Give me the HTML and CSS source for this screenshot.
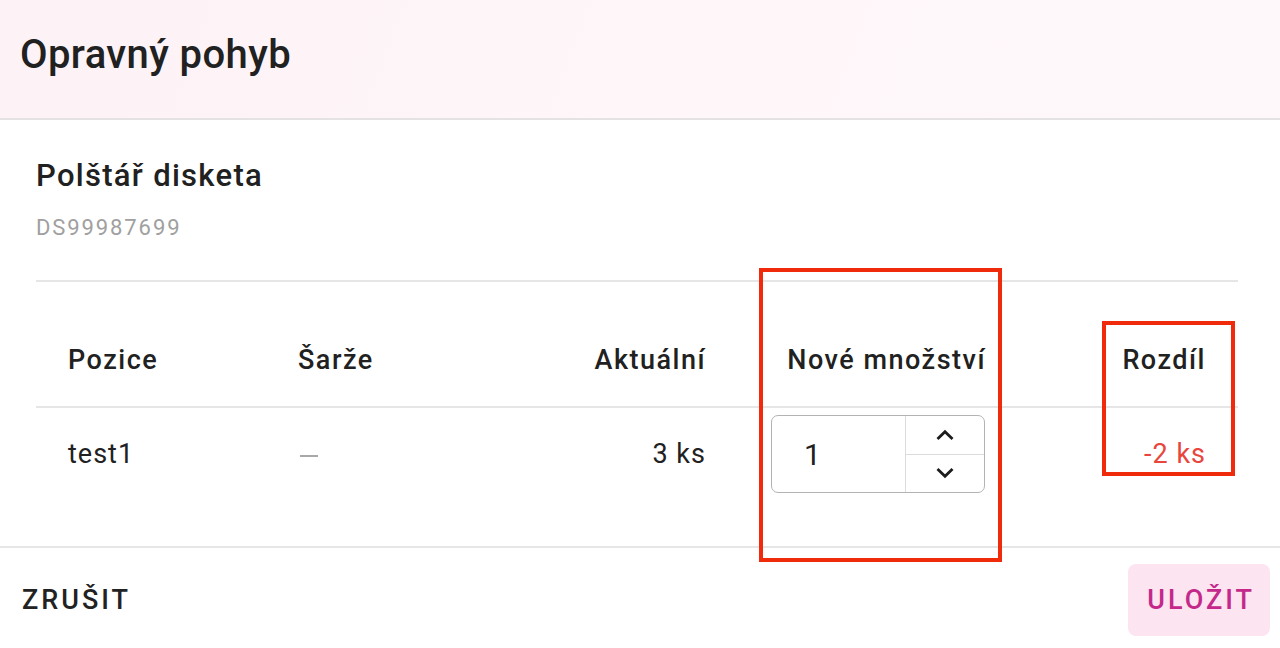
FILE: index.html
```html
<!DOCTYPE html>
<html lang="cs">
  <head>
    <meta charset="UTF-8" />
    <meta name="viewport" content="width=device-width, initial-scale=1.0" />
    <title>Opravný pohyb</title>
    <link rel="stylesheet" href="styles.css">
  </head>

  <body>
    <div class="dialog">
      <div class="dialog-header">
        <h1>Opravný pohyb</h1>
      </div>

      <div class="dialog-body">
        <div class="product">
          <h2>Polštář disketa</h2>
          <div class="sku">DS99987699</div>
        </div>

        <div class="table">
          <div class="row head">
            <div class="cell">Pozice</div>
            <div class="cell">Šarže</div>
            <div class="cell right">Aktuální</div>
            <div class="cell right">Nové množství</div>
            <div class="cell right">Rozdíl</div>
          </div>
          <div class="row">
            <div class="cell">test1</div>
            <div class="cell"><span class="dash"></span></div>
            <div class="cell right">3 ks</div>
            <div class="cell">
              <div class="qty">
                <input type="text" value="1" />
                <div class="spin">
                  <button type="button">
                    <svg width="20" height="12" viewBox="0 0 20 12"><path d="M2.5 10 L10 2.8 L17.5 10" fill="none" stroke="#1c1c1c" stroke-width="2.8"/></svg>
                  </button>
                  <button type="button">
                    <svg width="20" height="12" viewBox="0 0 20 12"><path d="M2.5 2 L10 9.2 L17.5 2" fill="none" stroke="#1c1c1c" stroke-width="2.8"/></svg>
                  </button>
                </div>
              </div>
            </div>
            <div class="cell right diff">-2 ks</div>
          </div>
        </div>
      </div>

      <div class="dialog-footer">
        <button type="button" class="btn">Zrušit</button>
        <button type="button" class="btn primary">Uložit</button>
      </div>
    </div>

    <!-- annotation marks -->
    <div class="mark mark-qty"></div>
    <div class="mark mark-diff"></div>
  </body>
</html>
```

FILE: styles.css
```css
* {
  box-sizing: border-box;
}

body {
  margin: 0;
  padding: 0;
  background-color: #fff;
  font-family: Roboto, "Noto Sans", sans-serif;
  color: #212121;
  width: 1280px;
  height: 648px;
  overflow: hidden;
  position: relative;
}

.dialog-header {
  height: 120px;
  padding-left: 20px;
  display: flex;
  align-items: center;
  padding-bottom: 10px;
  background: linear-gradient(110deg, #fdf2f6 0%, #fef6f9 50%, #fff8fa 100%);
  border-bottom: 2px solid #e4e2e3;
}

.dialog-header h1 {
  margin: 0;
  font-size: 40px;
  font-weight: 500;
  letter-spacing: 0.4px;
}

.dialog-body {
  padding: 0 42px 0 36px;
  height: 426px;
}

.product {
  padding-top: 37px;
  height: 162px;
  border-bottom: 2px solid #e6e6e6;
}

.product h2 {
  margin: 0;
  font-size: 31px;
  line-height: 38px;
  font-weight: 500;
  letter-spacing: 1.3px;
}

.sku {
  margin-top: 19px;
  font-size: 22px;
  line-height: 28px;
  color: #a0a0a0;
  letter-spacing: 1.9px;
}

.row {
  display: grid;
  grid-template-columns: 230px 230px 241px 280px 1fr;
}

.row.head {
  height: 126px;
  align-items: end;
  padding-bottom: 30px;
  border-bottom: 2px solid #e6e6e6;
  font-size: 27px;
  line-height: 32px;
  font-weight: 500;
  letter-spacing: 1.5px;
}

.row:not(.head) {
  height: 92px;
  align-items: center;
  font-size: 27px;
  letter-spacing: 1px;
}

.cell {
  padding: 0 32px;
}

.cell.right {
  text-align: right;
}

.row .cell:nth-child(4) {
  padding-left: 34px;
}

.row .cell:nth-child(5) {
  padding-right: 33px;
}

.row .cell.right {
  margin-right: -1px;
}

.dash {
  display: inline-block;
  width: 18px;
  height: 2px;
  margin-left: 2px;
  vertical-align: middle;
  background-color: #a8a8a8;
}

.diff {
  color: #e8463d;
}

.qty {
  display: flex;
  width: 214px;
  height: 78px;
  border: 1.5px solid #b3b3b3;
  border-radius: 7px;
  overflow: hidden;
}

.qty input {
  width: 133px;
  border: none;
  outline: none;
  padding-left: 32px;
  font-family: inherit;
  font-size: 30px;
  color: #212121;
  background: transparent;
}

.spin {
  flex: 1;
  display: flex;
  flex-direction: column;
  border-left: 1.5px solid #dcdcdc;
}

.spin button {
  flex: 1;
  border: none;
  background: transparent;
  padding: 0;
  display: flex;
  align-items: center;
  justify-content: center;
}

.spin button + button {
  border-top: 1.5px solid #dcdcdc;
}

.dialog-footer {
  border-top: 2px solid #e6e6e6;
  height: 102px;
  display: flex;
  align-items: center;
  justify-content: space-between;
  padding: 4px 10px 0 22px;
}

.btn {
  font-family: inherit;
  font-size: 27px;
  font-weight: 500;
  letter-spacing: 3px;
  text-transform: uppercase;
  color: #222;
  background: transparent;
  border: none;
  padding: 0;
  height: 72px;
  border-radius: 8px;
}

.btn.primary {
  background-color: #fce4f0;
  color: #c3288a;
  padding: 0 15px 0 19px;
}

.mark {
  position: absolute;
  border: 4px solid #ef2b0c;
}

.mark-qty {
  left: 759px;
  top: 268px;
  width: 243px;
  height: 294px;
}

.mark-diff {
  left: 1102px;
  top: 321px;
  width: 133px;
  height: 155px;
}
```
